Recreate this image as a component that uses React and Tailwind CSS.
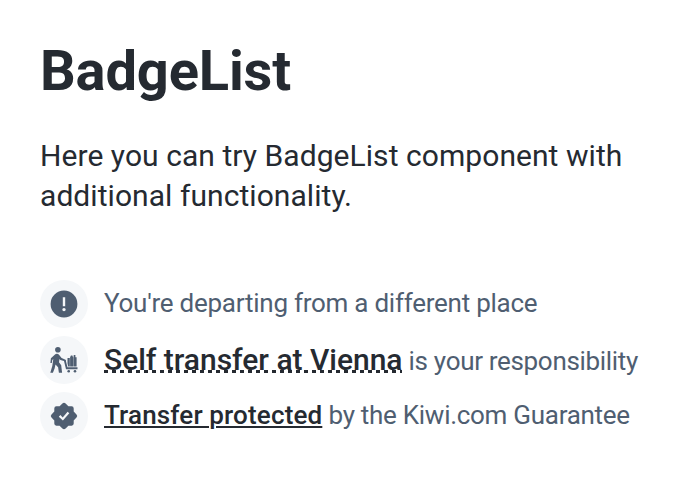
import React from "react";

function Row({ icon, children }) {
  return (
    <li className="flex h-12 items-center">
      <span className="mr-4 flex size-12 shrink-0 items-center justify-center rounded-full bg-[#f5f7f9] text-[#4f5e71]">
        <svg viewBox="0 0 32 32" className="size-8" fill="currentColor">{icon}</svg>
      </span>
      <span className="whitespace-nowrap text-[26px] leading-8 tracking-[-0.25px] text-[#4f5e71]">{children}</span>
    </li>
  );
}

const alertIcon = (
  <path fillRule="evenodd" d="M16 2.6a13.4 13.4 0 1 0 0 26.8 13.4 13.4 0 0 0 0-26.8ZM14.8 9.2h2.4v9h-2.4ZM16 19.9a1.7 1.7 0 1 1 0 3.4 1.7 1.7 0 0 1 0-3.4Z" />
);

const transferIcon = (
  <>
    <circle cx="9.9" cy="5.7" r="2.8" />
    <path d="M7 10.4c1.2-1 3.2-.8 4.2.5l2.4 3.2 3.4 1.3c.8.3 1.2 1 1 1.8l-.2.4-5.4-1.6-.9-1.1-.5 3.4 2.2 2.9.9 7.6h-3.2l-.8-5.6-2.6-2.7-.9 3.9-1.7 4.4H2.3l2-6.9 1-6.8-1 1-.5 2.9H2.4l.5-4.7Z" />
    <path d="M16 17h1.9l1.6 6.3h10v1.9H18Z" />
    <path d="M19.5 14h2.3v8.5h-1.6l-.7-2.9ZM22.1 12.6h3.1v9.9h-3.1ZM25.5 13.3h3.1v9.2h-3.1ZM25.7 11h1.7v2.8h-1.7ZM22.8 11.6h1.7v1.5h-1.7Z" />
    <circle cx="20.7" cy="27.3" r="1.3" />
    <circle cx="27" cy="27.3" r="1.3" />
  </>
);

const guaranteeIcon = (
  <path fillRule="evenodd" d="M14.4 3.5q1.6-1.5 3.2 0l2.8 2.8h3.2q2.1 0 2.1 2.1v3.2l2.8 2.8q1.5 1.6 0 3.2l-2.8 2.8v3.2q0 2.1-2.1 2.1h-3.2l-2.8 2.8q-1.6 1.5-3.2 0l-2.8-2.8H8.4q-2.1 0-2.1-2.1v-3.2l-2.8-2.8q-1.5-1.6 0-3.2l2.8-2.8V8.4q0-2.1 2.1-2.1h3.2ZM14.9 20.6l6.4-7.4-1.7-1.4-4.9 5.6-2.3-2.3-1.6 1.6Z" />
);

export default function App() {
  return (
    <main className="h-[480px] w-[686px] bg-white px-10 pt-[39px] font-['Roboto',sans-serif]">
      <h1 className="text-[56px] font-bold leading-[64px] tracking-[-0.14px] text-[#252a31]">BadgeList</h1>
      <p className="mt-[33px] whitespace-nowrap text-[30px] leading-10 tracking-[0.06px] text-[#252a31]">
        Here you can try BadgeList component with<br />additional functionality.
      </p>
      <ul className="mt-16 flex flex-col gap-2">
        <Row icon={alertIcon}><span className="block pb-0.5">You're departing from a different place</span></Row>
        <Row icon={transferIcon}><span className="bg-[repeating-linear-gradient(90deg,#252a31_0_4px,transparent_4px_8px)] bg-[length:100%_3px] bg-[position:0_28px] bg-no-repeat text-[30px] font-medium tracking-[-0.02px] text-[#252a31]">Self transfer at Vienna</span><span className="tracking-[-0.32px]"> is your responsibility</span></Row>
        <Row icon={guaranteeIcon}><span className="block pb-0.5"><span className="font-medium tracking-[0.15px] text-[#252a31] underline decoration-2 underline-offset-2">Transfer protected</span><span className="tracking-[-0.28px]"> by the Kiwi.com Guarantee</span></span></Row>
      </ul>
    </main>
  );
}
